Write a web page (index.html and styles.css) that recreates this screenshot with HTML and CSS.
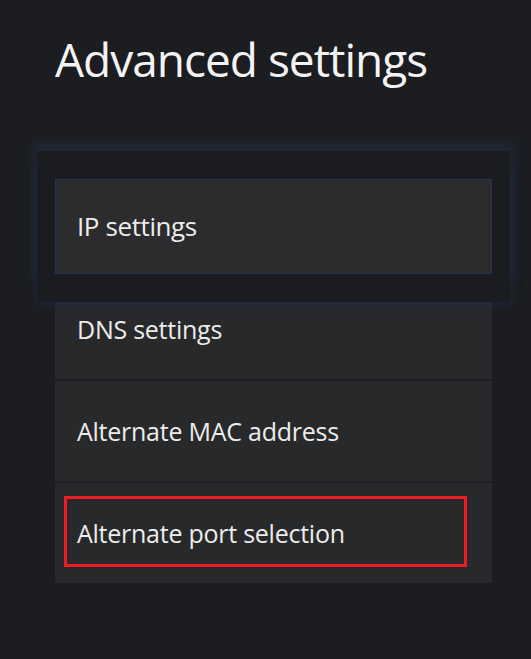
FILE: index.html
```html
<!DOCTYPE html>
<html lang="en">
<head>
<meta charset="utf-8">
<title>Advanced settings</title>
<link rel="stylesheet" href="styles.css">
</head>
<body>
<main class="page">
  <h1 class="title">Advanced settings</h1>
  <ul class="list">
    <li class="item focused">IP settings</li>
    <li class="item">DNS settings</li>
    <li class="item">Alternate MAC address</li>
    <li class="item marked">Alternate port selection<span class="mark"></span></li>
  </ul>
</main>
</body>
</html>
```
FILE: styles.css
```css
html, body {
  margin: 0;
  padding: 0;
  background: #1c1d21;
}
body {
  width: 531px;
  height: 659px;
  overflow: hidden;
  font-family: "Open Sans", "Noto Sans", sans-serif;
  color: #ececec;
}
.page {
  display: flex;
  flex-direction: column;
}
.title {
  margin: 36px 0 0 55px;
  font-size: 46px;
  line-height: 46px;
  font-weight: 400;
  letter-spacing: -1px;
  color: #f3f3f3;
}
.list {
  list-style: none;
  display: flex;
  flex-direction: column;
  margin: 93px 0 0 55px;
  padding: 0;
  width: 437px;
}
.item {
  position: relative;
  background: #28292b;
  border-top: 2px solid #1f2023;
  height: 100px;
  line-height: 100px;
  font-size: 25px;
  letter-spacing: -0.25px;
  padding-left: 22px;
  white-space: nowrap;
}
.item.focused {
  z-index: 1;
  border: 1px solid #21355c;
  box-sizing: border-box;
  height: 95px;
  line-height: 93px;
  margin: 4px 0 3px;
  padding-left: 21px;
  font-size: 26px;
  letter-spacing: -0.4px;
  background: #2c2c2e;
  box-shadow:
    0 -10px 0 18px #1b1c20,
    0 10px 0 18px #1b1c20,
    0 -16px 10px 22px rgba(40, 56, 90, 0.35),
    0 12px 8px 20px rgba(30, 50, 90, 0.35);
}
.mark {
  position: absolute;
  top: 13px;
  left: 9px;
  width: 403px;
  height: 71px;
  box-sizing: border-box;
  border: 3px solid #ed1c24;
}
```
